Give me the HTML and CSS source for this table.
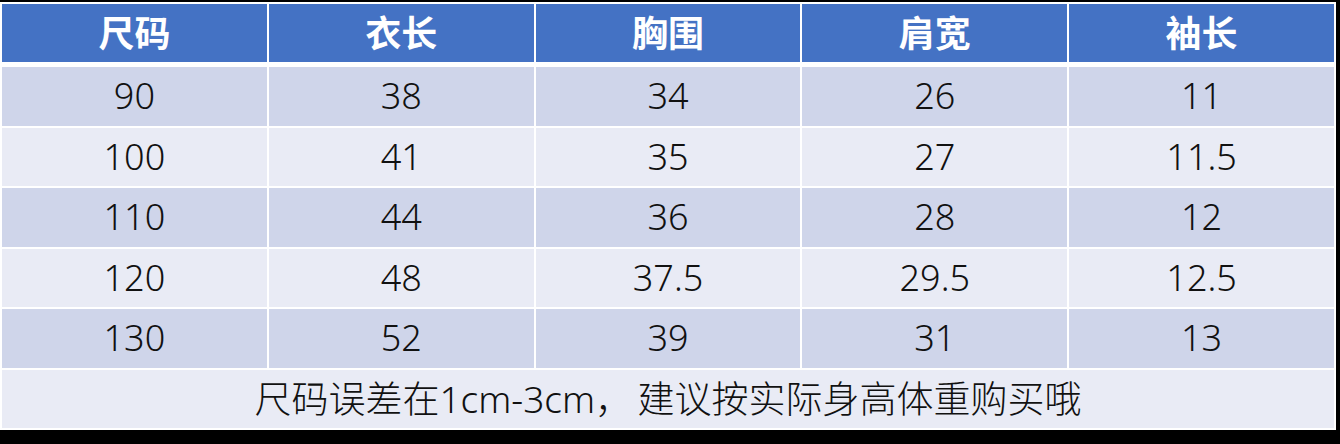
FILE: index.html
```html
<!DOCTYPE html>
<html lang="zh-CN">
<head>
<meta charset="utf-8">
<title>尺码表</title>
<link rel="stylesheet" href="styles.css">
</head>
<body>
<div class="sheet">
  <div class="table">
    <div class="cell head">尺码</div>
    <div class="cell head">衣长</div>
    <div class="cell head">胸围</div>
    <div class="cell head">肩宽</div>
    <div class="cell head">袖长</div>

    <div class="cell dark">90</div>
    <div class="cell dark">38</div>
    <div class="cell dark">34</div>
    <div class="cell dark">26</div>
    <div class="cell dark">11</div>

    <div class="cell light">100</div>
    <div class="cell light">41</div>
    <div class="cell light">35</div>
    <div class="cell light">27</div>
    <div class="cell light">11.5</div>

    <div class="cell dark">110</div>
    <div class="cell dark">44</div>
    <div class="cell dark">36</div>
    <div class="cell dark">28</div>
    <div class="cell dark">12</div>

    <div class="cell light">120</div>
    <div class="cell light">48</div>
    <div class="cell light">37.5</div>
    <div class="cell light">29.5</div>
    <div class="cell light">12.5</div>

    <div class="cell dark">130</div>
    <div class="cell dark">52</div>
    <div class="cell dark">39</div>
    <div class="cell dark">31</div>
    <div class="cell dark">13</div>

    <div class="cell light note">尺码误差在1cm-3cm<span class="fw">，</span>建议按实际身高体重购买哦</div>
  </div>
</div>
</body>
</html>
```

FILE: styles.css
```css
html, body {
  margin: 0;
  padding: 0;
  background: #000;
}

body {
  width: 1340px;
  height: 444px;
  overflow: hidden;
  font-family: "Noto Sans", "Noto Sans CJK SC", sans-serif;
}

.sheet {
  margin-top: 2px;
  width: 1336px;
  height: 428px;
  box-sizing: border-box;
  padding: 2px;
  background: #ffffff;
}

.table {
  display: grid;
  grid-template-columns: repeat(5, 1fr);
  grid-template-rows: 61px repeat(6, 1fr);
  column-gap: 2px;
  row-gap: 2px;
  height: 100%;
}

.cell {
  display: flex;
  align-items: center;
  justify-content: center;
  font-size: 36px;
  font-weight: 300;
  color: #111;
  line-height: 1;
}

.head {
  margin-bottom: 3px;
  background: #4472c4;
  color: #ffffff;
  font-family: "Noto Sans CJK SC", sans-serif;
  font-weight: 700;
  font-size: 36px;
  padding-bottom: 4px;
}

.dark {
  background: #cfd5ea;
}

.light {
  background: #e9ebf5;
}

.note {
  grid-column: 1 / -1;
  font-size: 37px;
}

.fw {
  font-family: "Noto Sans CJK SC", sans-serif;
  display: inline-block;
  width: 1.15em;
}
```
